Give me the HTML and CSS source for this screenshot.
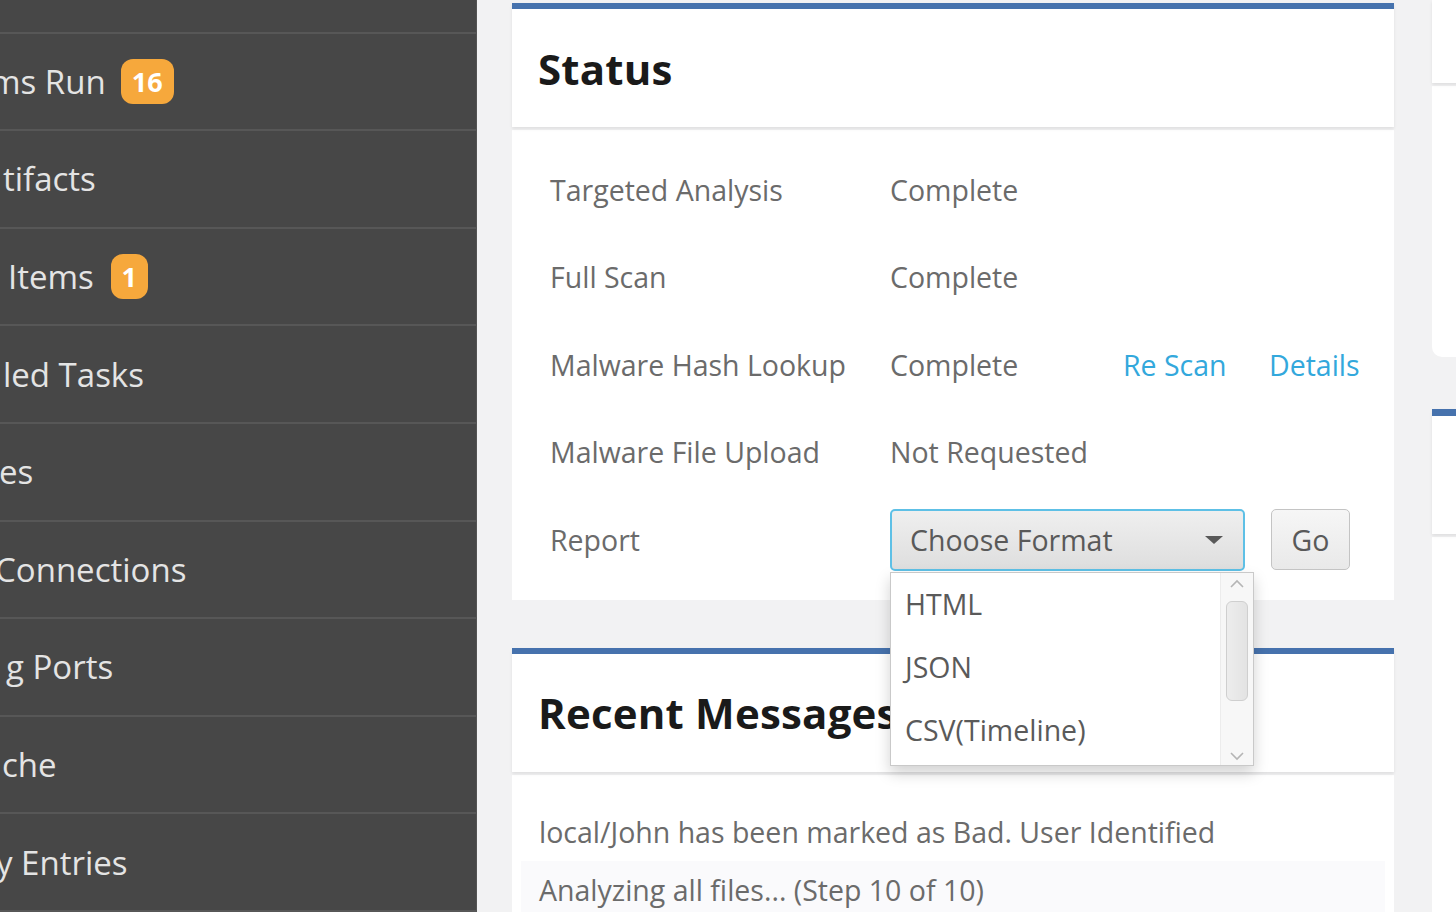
FILE: index.html
```html
<!DOCTYPE html>
<html lang="en">
<head>
<meta charset="utf-8">
<title>Status</title>
<link rel="stylesheet" href="styles.css">
</head>
<body>
<div class="app">
  <nav class="sidebar">
    <ul class="nav-list">
      <li class="nav-item"><span class="nav-text"></span></li>
      <li class="nav-item"><span class="nav-text nav-text--run">ms Run</span><span class="badge">16</span></li>
      <li class="nav-item"><span class="nav-text nav-text--artifacts">tifacts</span></li>
      <li class="nav-item"><span class="nav-text nav-text--items">Items</span><span class="badge badge--one">1</span></li>
      <li class="nav-item"><span class="nav-text nav-text--tasks">led Tasks</span></li>
      <li class="nav-item"><span class="nav-text nav-text--es">es</span></li>
      <li class="nav-item"><span class="nav-text nav-text--conn">Connections</span></li>
      <li class="nav-item"><span class="nav-text nav-text--ports">g Ports</span></li>
      <li class="nav-item"><span class="nav-text nav-text--cache">che</span></li>
      <li class="nav-item"><span class="nav-text nav-text--entries">y Entries</span></li>
    </ul>
  </nav>

  <main class="main">
    <section class="column column--left">
      <div class="card">
        <header class="card-header"><h2 class="card-title">Status</h2></header>
        <div class="card-body status-grid">
          <div class="cell label">Targeted Analysis</div>
          <div class="cell value">Complete</div>
          <div class="cell"></div>
          <div class="cell"></div>

          <div class="cell label">Full Scan</div>
          <div class="cell value">Complete</div>
          <div class="cell"></div>
          <div class="cell"></div>

          <div class="cell label">Malware Hash Lookup</div>
          <div class="cell value">Complete</div>
          <div class="cell"><a class="link" href="#">Re Scan</a></div>
          <div class="cell"><a class="link" href="#">Details</a></div>

          <div class="cell label">Malware File Upload</div>
          <div class="cell value">Not Requested</div>
          <div class="cell"></div>
          <div class="cell"></div>

          <div class="cell label">Report</div>
          <div class="cell report-controls">
            <div class="select-wrap">
              <div class="select">
                <span class="select-text">Choose Format</span>
                <span class="caret"></span>
              </div>
              <div class="dropdown">
                <ul class="dropdown-list">
                  <li class="dropdown-item">HTML</li>
                  <li class="dropdown-item">JSON</li>
                  <li class="dropdown-item">CSV(Timeline)</li>
                </ul>
                <div class="scrollbar">
                  <svg class="scroll-arrow" width="16" height="10" viewBox="0 0 16 10"><path d="M2 8 L8 2 L14 8" fill="none" stroke="#b5b5b5" stroke-width="1.6"/></svg>
                  <div class="scroll-track"><div class="scroll-thumb"></div></div>
                  <svg class="scroll-arrow" width="16" height="10" viewBox="0 0 16 10"><path d="M2 2 L8 8 L14 2" fill="none" stroke="#b5b5b5" stroke-width="1.6"/></svg>
                </div>
              </div>
            </div>
            <button class="btn">Go</button>
          </div>
        </div>
      </div>

      <div class="card card--messages">
        <header class="card-header"><h2 class="card-title">Recent Messages</h2></header>
        <div class="card-body messages">
          <div class="message">local/John has been marked as Bad. User Identified</div>
          <div class="message message--alt">Analyzing all files... (Step 10 of 10)</div>
        </div>
      </div>
    </section>

    <section class="column column--right">
      <div class="card card--side card--notop">
        <header class="card-header card-header--side"></header>
        <div class="card-body card-body--side"></div>
      </div>
      <div class="card card--side card--side2">
        <header class="card-header card-header--side2"></header>
        <div class="card-body card-body--side2"></div>
      </div>
    </section>
  </main>
</div>
</body>
</html>
```

FILE: styles.css
```css
* { box-sizing: border-box; }

html, body {
  margin: 0;
  padding: 0;
  height: 100%;
}

body {
  font-family: "Open Sans", "Noto Sans", "Liberation Sans", sans-serif;
  background: #f2f2f3;
  overflow: hidden;
}

.app {
  display: flex;
  width: 1456px;
  height: 912px;
  overflow: hidden;
}

/* Sidebar */
.sidebar {
  flex: 0 0 477px;
  background: #474747;
  overflow: hidden;
  border-right: 1px solid #545454;
}

.nav-list {
  list-style: none;
  margin: -64px 0 0 0;
  padding: 0;
}

.nav-item {
  display: flex;
  align-items: center;
  height: 97.6px;
  border-bottom: 2px solid #575757;
  font-size: 33px;
  color: #e4e4e4;
  white-space: nowrap;
}

.nav-text { display: inline-block; }
.nav-text--run { margin-left: -10px; }
.nav-text--artifacts { margin-left: 3px; }
.nav-text--items { margin-left: 8px; }
.nav-text--tasks { margin-left: 3px; }
.nav-text--es { margin-left: -1px; }
.nav-text--conn { margin-left: -5px; }
.nav-text--ports { margin-left: 6px; }
.nav-text--cache { margin-left: 2px; }
.nav-text--entries { margin-left: -4px; }

.badge {
  display: inline-flex;
  align-items: center;
  justify-content: center;
  height: 45px;
  min-width: 53px;
  padding: 0 8px;
  margin-left: 15px;
  border-radius: 12px;
  background: #f6a83c;
  color: #fff;
  font-weight: 700;
  font-size: 27px;
}

.badge--one {
  min-width: 37px;
  margin-left: 17px;
}

/* Main */
.main {
  flex: 1;
  display: flex;
  gap: 38px;
  padding-left: 35px;
  overflow: hidden;
}

.column--left {
  flex: 0 0 882px;
  padding-top: 3px;
}

.column--right {
  flex: 0 0 400px;
}

.card-header {
  background: #fff;
  border-top: 6px solid #4672ad;
  height: 124px;
  display: flex;
  align-items: center;
  padding-left: 26px;
  box-shadow: 0 2px 3px rgba(0, 0, 0, 0.08);
  position: relative;
}

.card-title {
  margin: 0;
  font-size: 42px;
  font-weight: 700;
  color: #1a1a1a;
  letter-spacing: 0.2px;
}

.card-body {
  background: #fff;
  margin-top: 3px;
}

.status-grid {
  display: grid;
  grid-template-columns: 340px 233px 146px 1fr;
  grid-auto-rows: 87.5px;
  align-items: center;
  padding: 16px 0 16px 38px;
  font-size: 28.5px;
  color: #6b6b6b;
}

.cell { white-space: nowrap; }

.link {
  color: #33a8dc;
  text-decoration: none;
}

.report-controls {
  grid-column: 2 / 5;
  display: flex;
  align-items: center;
  gap: 26px;
}

.select-wrap {
  position: relative;
}

.select {
  width: 355px;
  height: 62px;
  border: 2px solid #5ec0e6;
  border-radius: 5px;
  background: linear-gradient(#efefef, #dedede);
  display: flex;
  align-items: center;
  justify-content: space-between;
  padding: 0 20px 0 18px;
  color: #595959;
}

.caret {
  width: 0;
  height: 0;
  border-left: 9px solid transparent;
  border-right: 9px solid transparent;
  border-top: 8px solid #595959;
}

.btn {
  width: 79px;
  height: 61px;
  border: 1px solid #c4c4c4;
  border-radius: 5px;
  background: linear-gradient(#f6f6f6, #e9e9e9);
  font-family: inherit;
  font-size: 28.5px;
  color: #595959;
  padding: 0;
}

.dropdown {
  position: absolute;
  left: 0;
  top: 63px;
  width: 364px;
  height: 194px;
  background: #fff;
  border: 1px solid #c9c9c9;
  box-shadow: 0 7px 14px rgba(0, 0, 0, 0.18);
  display: flex;
  z-index: 10;
}

.dropdown-list {
  list-style: none;
  margin: 0;
  padding: 0;
  flex: 1;
}

.dropdown-item {
  height: 63px;
  display: flex;
  align-items: center;
  padding-left: 14px;
  color: #5a5a5a;
  font-size: 28.5px;
}

.scrollbar {
  flex: 0 0 33px;
  background: #f7f7f7;
  border-left: 1px solid #ececec;
  display: flex;
  flex-direction: column;
  align-items: center;
  padding: 6px 0 4px;
}

.scroll-track {
  flex: 1;
  width: 100%;
  padding: 12px 5px 4px;
}

.scroll-thumb {
  height: 100px;
  border: 1px solid #cfcfcf;
  border-radius: 6px;
  background: linear-gradient(90deg, #ededed, #e3e3e3);
}

.card--messages {
  margin-top: 48px;
}

.messages {
  padding: 29px 9px 20px;
  font-size: 28.5px;
  color: #6b6b6b;
  height: 200px;
}

.message {
  height: 57px;
  display: flex;
  align-items: center;
  padding-left: 18px;
  white-space: nowrap;
}

.message--alt {
  background: #fafafc;
  padding-top: 2px;
}

/* Right column */
.card--notop .card-header--side {
  border-top: none;
  height: 83px;
  box-shadow: 0 2px 3px rgba(0, 0, 0, 0.08);
}

.card-body--side {
  height: 271px;
  border-radius: 0 0 10px 10px;
}

.card--side2 {
  margin-top: 52px;
}

.card-header--side2 {
  border-top: 7px solid #4672ad;
  height: 125px;
}

.card-body--side2 {
  height: 400px;
}
```
